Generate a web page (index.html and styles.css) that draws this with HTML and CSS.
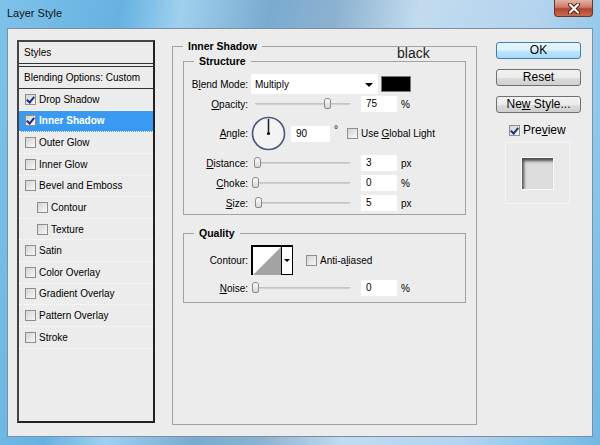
FILE: index.html
```html
<!DOCTYPE html>
<html lang="en">
<head>
    <meta charset="UTF-8">
    <title>Layer Style</title>
    <link rel="stylesheet" href="styles.css">
</head>
<body>
    <div class="window">
        <div class="titlebar">
            <span class="title">Layer Style</span>
            <span class="close">
                <svg width="16" height="11" viewBox="0 0 16 11">
                    <path d="M4 1.5 L12 9.5 M12 1.5 L4 9.5" stroke="#4a1c12" stroke-width="4" stroke-linecap="round"/>
                    <path d="M4 1.5 L12 9.5 M12 1.5 L4 9.5" stroke="#fff" stroke-width="2.2" stroke-linecap="round"/>
                </svg>
            </span>
        </div>

        <div class="client">
            <!-- styles list -->
            <div class="styles-list">
                <div class="list-head">Styles</div>
                <div class="list-blend">Blending Options: Custom</div>
                <div class="list-item"><span class="cb checked"></span>Drop Shadow</div>
                <div class="list-item selected"><span class="cb checked"></span>Inner Shadow</div>
                <div class="list-item"><span class="cb"></span>Outer Glow</div>
                <div class="list-item"><span class="cb"></span>Inner Glow</div>
                <div class="list-item"><span class="cb"></span>Bevel and Emboss</div>
                <div class="list-item sub"><span class="cb"></span>Contour</div>
                <div class="list-item sub"><span class="cb"></span>Texture</div>
                <div class="list-item"><span class="cb"></span>Satin</div>
                <div class="list-item"><span class="cb"></span>Color Overlay</div>
                <div class="list-item"><span class="cb"></span>Gradient Overlay</div>
                <div class="list-item"><span class="cb"></span>Pattern Overlay</div>
                <div class="list-item"><span class="cb"></span>Stroke</div>
            </div>

            <!-- settings -->
            <fieldset class="group main">
                <legend>Inner Shadow</legend>
                <span class="note">black</span>

                <fieldset class="group structure">
                    <legend>Structure</legend>
                    <div class="row blend-row">
                        <span class="lbl">B<u>l</u>end Mode:</span>
                        <div class="select">Multiply<i class="arrow"></i></div>
                        <span class="swatch"></span>
                    </div>
                    <div class="row opacity-row">
                        <span class="lbl"><u>O</u>pacity:</span>
                        <div class="slider"><span class="thumb" style="left: 77px"></span></div>
                        <span class="num">75</span>
                        <span class="unit">%</span>
                    </div>
                    <div class="row angle-row">
                        <span class="lbl"><u>A</u>ngle:</span>
                        <svg class="dial" width="35" height="35" viewBox="0 0 35 35">
                            <circle cx="17.5" cy="17.5" r="16" fill="#f3f3f3" stroke="#46597c" stroke-width="1.6"/>
                            <line x1="17.5" y1="17.5" x2="17.5" y2="3" stroke="#1a1a1a" stroke-width="1.5"/>
                            <circle cx="17.5" cy="17.5" r="1.6" fill="#111"/>
                        </svg>
                        <span class="num angle">90</span>
                        <span class="deg">°</span>
                        <span class="cb global"></span>
                        <span>Use <u>G</u>lobal Light</span>
                    </div>
                    <div class="row distance-row">
                        <span class="lbl"><u>D</u>istance:</span>
                        <div class="slider"><span class="thumb" style="left: 7px"></span></div>
                        <span class="num">3</span>
                        <span class="unit">px</span>
                    </div>
                    <div class="row choke-row">
                        <span class="lbl"><u>C</u>hoke:</span>
                        <div class="slider"><span class="thumb" style="left: 5px"></span></div>
                        <span class="num">0</span>
                        <span class="unit">%</span>
                    </div>
                    <div class="row size-row">
                        <span class="lbl"><u>S</u>ize:</span>
                        <div class="slider"><span class="thumb" style="left: 8px"></span></div>
                        <span class="num">5</span>
                        <span class="unit">px</span>
                    </div>
                </fieldset>

                <fieldset class="group quality">
                    <legend>Quality</legend>
                    <div class="row contour-row">
                        <span class="lbl">Contour:</span>
                        <div class="contour">
                            <svg width="28" height="28" viewBox="0 0 28 28">
                                <rect width="28" height="28" fill="#fff"/>
                                <polygon points="0,28 28,0 28,28" fill="#a3a3a3"/>
                            </svg>
                            <span class="contour-arrow"><i class="arrow"></i></span>
                        </div>
                        <span class="cb anti"></span>
                        <span>Anti-a<u>l</u>iased</span>
                    </div>
                    <div class="row noise-row">
                        <span class="lbl"><u>N</u>oise:</span>
                        <div class="slider"><span class="thumb" style="left: 5px"></span></div>
                        <span class="num">0</span>
                        <span class="unit">%</span>
                    </div>
                </fieldset>
            </fieldset>

            <!-- buttons -->
            <div class="side">
                <button class="btn default">OK</button>
                <button class="btn">Reset</button>
                <button class="btn">Ne<u>w</u> Style...</button>
                <div class="preview-check"><span class="cb checked"></span>Pre<u>v</u>iew</div>
                <div class="thumbnail"><div class="thumb-square"></div></div>
            </div>
        </div>
    </div>
</body>
</html>
```

FILE: styles.css
```css
body {
    margin: 0;
    font-family: "Liberation Sans", Arial, sans-serif;
    font-size: 10px;
    color: #000;
}
.window {
    width: 600px;
    height: 445px;
    display: flex;
    flex-direction: column;
    background: linear-gradient(100deg, #7ec2e9 0%, #65b2e2 18%, #9fd0ee 27%, #79abd0 40%, #8db2d0 50%, #c2dbee 62%, #b3d3ee 80%, #8cc6ea 92%, #6fb8e4 100%);
}
.titlebar {
    height: 28px;
    display: flex;
    justify-content: space-between;
    align-items: flex-start;
}
.title {
    font-size: 11px;
    line-height: 13px;
    padding: 7px 0 0 7px;
    color: #111;
}
.close {
    width: 39px;
    height: 17px;
    margin-right: 7px;
    box-sizing: border-box;
    border: 1px solid #6b3326;
    border-top: none;
    border-radius: 0 0 4px 4px;
    background: linear-gradient(#e6b2a4, #cc7a66 45%, #b3432b 55%, #c86a4f);
    display: flex;
    align-items: center;
    justify-content: center;
}
.client {
    margin: 0 7px;
    height: 409px;
    box-sizing: border-box;
    border: 1px solid #7d8fa4;
    background: #ececec;
    display: flex;
    align-items: flex-start;
    padding: 11px 0 0 9px;
}

/* styles list */
.styles-list {
    width: 138px;
    height: 383px;
    box-sizing: border-box;
    border: 2px solid #333;
    border-color: #444 #222 #222 #444;
    flex: none;
}
.list-head {
    height: 21px;
    line-height: 21px;
    padding-left: 5px;
    border-bottom: 1px solid #333;
    margin-bottom: 2px;
}
.list-blend {
    height: 21px;
    line-height: 21px;
    padding-left: 5px;
    border-top: 1px solid #333;
    border-bottom: 1px solid #333;
}
.list-item {
    height: 20.64px;
    display: flex;
    align-items: center;
    padding-left: 6px;
    border-bottom: 1px dotted #fdfdfd;
}
.list-item.sub {
    padding-left: 18px;
}
.list-item.selected {
    background: #3a9af2;
    color: #fff;
    font-weight: bold;
}
.cb {
    width: 11px;
    height: 11px;
    box-sizing: border-box;
    border: 1px solid #8e8e8e;
    background: linear-gradient(135deg, #d4d4d4, #f8f8f8);
    margin-right: 3px;
    flex: none;
    position: relative;
}
.cb.checked::after {
    content: "";
    position: absolute;
    left: 2px;
    top: 0px;
    width: 3px;
    height: 6px;
    border: solid #1d2f80;
    border-width: 0 2px 2px 0;
    transform: rotate(40deg);
}

/* group boxes */
fieldset.group {
    margin: 0;
    padding: 0;
    border: 1px solid #a2a2a2;
    min-inline-size: 0;
}
fieldset.group legend {
    font-weight: bold;
    font-size: 10.5px;
    line-height: 12px;
    padding: 0 5px;
    margin-left: 10px;
}
.main {
    width: 305px;
    height: 385px;
    box-sizing: border-box;
    margin-left: 17px !important;
    padding: 3px 10px 0 10px !important;
    position: relative;
    flex: none;
}
.main > legend {
    margin-left: 0 !important;
}
.note {
    position: absolute;
    left: 224px;
    top: -7px;
    font-size: 14px;
    line-height: 16px;
    color: #1c1c1c;
}
.structure {
    padding: 7px 0 3px 0 !important;
}
.quality {
    margin-top: 12px !important;
    padding: 6px 0 6px 0 !important;
}
.row {
    display: flex;
    align-items: center;
}
.lbl {
    width: 67px;
    box-sizing: border-box;
    text-align: right;
    padding-right: 3px;
    flex: none;
}
.blend-row { height: 20px; }
.opacity-row { height: 16px; margin-top: 2px; }
.angle-row { height: 35px; margin-top: 4px; }
.distance-row { height: 16px; margin-top: 4px; }
.choke-row { height: 16px; margin-top: 4px; }
.size-row { height: 16px; margin-top: 4px; }
.contour-row { height: 30px; }
.noise-row { height: 16px; margin-top: 5px; }

.select {
    width: 127px;
    height: 20px;
    box-sizing: border-box;
    background: #fff;
    padding: 1px 5px 0 4px;
    display: flex;
    align-items: center;
    justify-content: space-between;
}
.arrow {
    width: 0;
    height: 0;
    border-left: 4px solid transparent;
    border-right: 4px solid transparent;
    border-top: 4px solid #000;
}
.swatch {
    width: 30px;
    height: 16px;
    box-sizing: border-box;
    background: #000;
    border: 1px solid #7a7a7a;
    margin-left: 3px;
}
.slider {
    width: 103px;
    height: 16px;
    position: relative;
    flex: none;
}
.slider::before {
    content: "";
    position: absolute;
    left: 4px;
    right: 4px;
    top: 7px;
    height: 1px;
    background: #c4c4c4;
    border-bottom: 1px dotted #dcdcdc;
}
.thumb {
    position: absolute;
    top: 2px;
    width: 7px;
    height: 11px;
    margin-left: -4px;
    box-sizing: border-box;
    border: 1px solid #8a8a8a;
    border-radius: 3px 3px 2px 2px;
    background: linear-gradient(#fdfdfd, #d6d6d6);
}
.num {
    width: 36px;
    height: 16px;
    box-sizing: border-box;
    background: #fff;
    padding-left: 5px;
    line-height: 16px;
    margin-left: 7px;
    flex: none;
}
.unit {
    margin-left: 4px;
}
.dial {
    flex: none;
}
.num.angle {
    width: 39px;
    margin-left: 5px;
}
.deg {
    align-self: flex-start;
    margin: 8px 0 0 4px;
}
.cb.global {
    margin-left: 9px;
}
.contour {
    display: flex;
    height: 30px;
    box-sizing: border-box;
    border: 1px solid #000;
    border-left-width: 2px;
    border-top-width: 2px;
    flex: none;
}
.contour svg {
    display: block;
}
.contour-arrow {
    width: 10px;
    border-left: 1px solid #000;
    background: #fff;
    display: flex;
    align-items: center;
    justify-content: center;
}
.contour-arrow .arrow {
    border-left-width: 3px;
    border-right-width: 3px;
    border-top-width: 3px;
}
.cb.anti {
    margin-left: 13px;
}

/* buttons column */
.side {
    width: 85px;
    margin-left: 19px;
    padding-top: 2px;
    display: flex;
    flex-direction: column;
    align-items: flex-start;
    flex: none;
}
.btn {
    width: 85px;
    height: 17px;
    padding: 0;
    margin: 0 0 10px 0;
    font-family: "Liberation Sans", Arial, sans-serif;
    font-size: 12px;
    line-height: 15px;
    color: #000;
    border: 1px solid #707070;
    border-radius: 3px;
    background: linear-gradient(#f2f2f2, #ebebeb 50%, #dddddd 51%, #cfcfcf);
}
.btn.default {
    border-color: #3c7fb1;
    background: linear-gradient(#eaf6fd, #d9f0fc 50%, #bee6fd 51%, #a7d9f5);
}
.preview-check {
    display: flex;
    align-items: center;
    height: 14px;
    margin: 0 0 0 13px;
    font-size: 12px;
}
.thumbnail {
    width: 65px;
    height: 62px;
    margin: 5px 0 0 9px;
    box-sizing: border-box;
    border: 1px solid #f6f6f6;
    background-color: #e2e2e2;
    background-image: radial-gradient(#f3f3f3 0.6px, transparent 0.8px);
    background-size: 2px 2px;
    display: flex;
    align-items: center;
    justify-content: center;
}
.thumb-square {
    width: 31px;
    height: 31px;
    background: #dcdcdc;
    box-shadow: inset 2px 3px 3px rgba(0, 0, 0, 0.65), 0 0 0 1px #fafafa;
}
```
